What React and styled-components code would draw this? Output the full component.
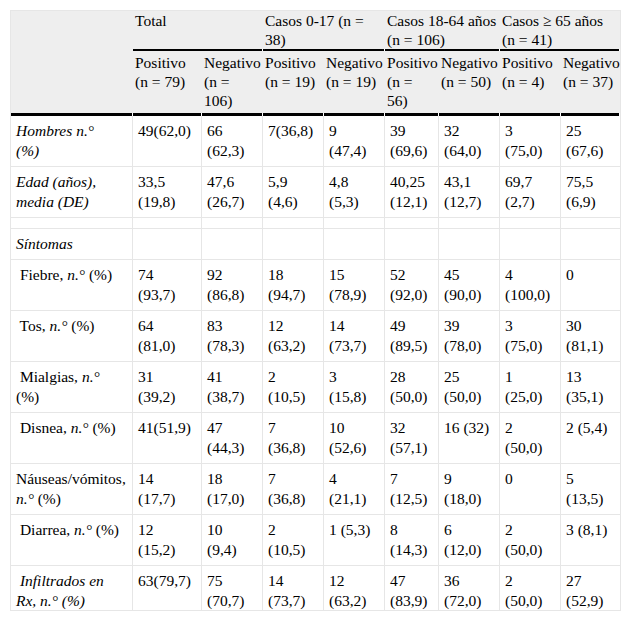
import React from "react";
import styled, { createGlobalStyle } from "styled-components";

const GlobalStyle = createGlobalStyle`
    body {
        margin: 0;
        background: #fff;
    }
`;

const widths = [122, 69, 61, 61, 61, 54, 61, 61, 59];

const groups = [
    { label: "Total", span: 2 },
    { label: "Casos 0-17 (n =\n38)", span: 2 },
    { label: "Casos 18-64 años\n(n = 106)", span: 2 },
    { label: "Casos ≥ 65 años\n(n = 41)", span: 2 },
];

const subHeads = [
    "Positivo\n(n = 79)",
    "Negativo\n(n =\n106)",
    "Positivo\n(n = 19)",
    "Negativo\n(n = 19)",
    "Positivo\n(n =\n56)",
    "Negativo\n(n = 50)",
    "Positivo\n(n = 4)",
    "Negativo\n(n = 37)",
];

const rows = [
    {
        label: <Em>{"Hombres n.°\n(%)"}</Em>,
        values: ["49(62,0)", "66\n(62,3)", "7(36,8)", "9\n(47,4)", "39\n(69,6)", "32\n(64,0)", "3\n(75,0)", "25\n(67,6)"],
    },
    {
        label: <Em>{"Edad (años),\nmedia (DE)"}</Em>,
        values: ["33,5\n(19,8)", "47,6\n(26,7)", "5,9\n(4,6)", "4,8\n(5,3)", "40,25\n(12,1)", "43,1\n(12,7)", "69,7\n(2,7)", "75,5\n(6,9)"],
    },
    { label: null, values: ["", "", "", "", "", "", "", ""] },
    { label: <Em>Síntomas</Em>, values: ["", "", "", "", "", "", "", ""] },
    {
        label: <>{" Fiebre, "}<Em>n.°</Em>{" (%)"}</>,
        values: ["74\n(93,7)", "92\n(86,8)", "18\n(94,7)", "15\n(78,9)", "52\n(92,0)", "45\n(90,0)", "4\n(100,0)", "0"],
    },
    {
        label: <>{" Tos, "}<Em>n.°</Em>{" (%)"}</>,
        values: ["64\n(81,0)", "83\n(78,3)", "12\n(63,2)", "14\n(73,7)", "49\n(89,5)", "39\n(78,0)", "3\n(75,0)", "30\n(81,1)"],
    },
    {
        label: <>{" Mialgias, "}<Em>n.°</Em>{"\n(%)"}</>,
        values: ["31\n(39,2)", "41\n(38,7)", "2\n(10,5)", "3\n(15,8)", "28\n(50,0)", "25\n(50,0)", "1\n(25,0)", "13\n(35,1)"],
    },
    {
        label: <>{" Disnea, "}<Em>n.°</Em>{" (%)"}</>,
        values: ["41(51,9)", "47\n(44,3)", "7\n(36,8)", "10\n(52,6)", "32\n(57,1)", "16 (32)", "2\n(50,0)", "2 (5,4)"],
    },
    {
        label: <>{"Náuseas/vómitos,\n"}<Em>n.°</Em>{" (%)"}</>,
        values: ["14\n(17,7)", "18\n(17,0)", "7\n(36,8)", "4\n(21,1)", "7\n(12,5)", "9\n(18,0)", "0", "5\n(13,5)"],
    },
    {
        label: <>{" Diarrea, "}<Em>n.°</Em>{" (%)"}</>,
        values: ["12\n(15,2)", "10\n(9,4)", "2\n(10,5)", "1 (5,3)", "8\n(14,3)", "6\n(12,0)", "2\n(50,0)", "3 (8,1)"],
    },
    {
        label: <Em>{" Infiltrados en\nRx, n.° (%)"}</Em>,
        values: ["63(79,7)", "75\n(70,7)", "14\n(73,7)", "12\n(63,2)", "47\n(83,9)", "36\n(72,0)", "2\n(50,0)", "27\n(52,9)"],
    },
];

const App = () => {
    return (
        <>
            <GlobalStyle />
            <Page>
                <Frame>
                    <Table>
                        <colgroup>
                            {widths.map((w, i) => (
                                <col key={i} style={{ width: w }} />
                            ))}
                        </colgroup>
                        <thead>
                            <tr>
                                <HeadCell rowSpan={2} $line={3} $top={false} />
                                {groups.map((g, i) => (
                                    <HeadCell key={i} colSpan={g.span} $line={2} $top={true}>
                                        {g.label}
                                    </HeadCell>
                                ))}
                            </tr>
                            <tr>
                                {subHeads.map((h, i) => (
                                    <HeadCell key={i} $line={3} $top={false}>
                                        {h}
                                    </HeadCell>
                                ))}
                            </tr>
                        </thead>
                        <tbody>
                            {rows.map((r, i) => (
                                <tr key={i}>
                                    <Cell>{r.label}</Cell>
                                    {r.values.map((v, j) => (
                                        <Cell key={j} $last={j === r.values.length - 1}>
                                            {v}
                                        </Cell>
                                    ))}
                                </tr>
                            ))}
                        </tbody>
                    </Table>
                </Frame>
            </Page>
        </>
    );
};

export default App;

function Em({ children }) {
    return <Italic>{children}</Italic>;
}

const Page = styled.div`
    padding: 10px 0 0 10px;
    font-family: "Liberation Serif", "Times New Roman", serif;
    font-size: 15.5px;
    color: #000;
`

const Frame = styled.div`
    width: 611px;
    height: 601px;
    box-sizing: border-box;
    border: 1px solid #e6e6e6;
    overflow: hidden;
`

const Table = styled.table`
    width: 609px;
    table-layout: fixed;
    border-collapse: separate;
    border-spacing: 0;
`

const HeadCell = styled.th`
    padding: ${(p) => (p.$top ? "0 2px 2px" : "2px 2px 6px")};
    font-weight: normal;
    text-align: left;
    vertical-align: top;
    line-height: 19px;
    white-space: pre;
    background:
        linear-gradient(#000, #000) left bottom / calc(100% - 1px) ${(p) => p.$line}px no-repeat,
        linear-gradient(#fff, #fff) right bottom / 1px ${(p) => p.$line}px no-repeat,
        #eeeeee;
`

const Cell = styled.td`
    padding: 5px 5px;
    text-align: left;
    vertical-align: top;
    line-height: 20px;
    white-space: pre;
    border-bottom: 1px solid #e6e6e6;
    border-right: ${(p) => (p.$last ? "none" : "1px solid #e6e6e6")};
`

const Italic = styled.i`
    font-style: italic;
`
